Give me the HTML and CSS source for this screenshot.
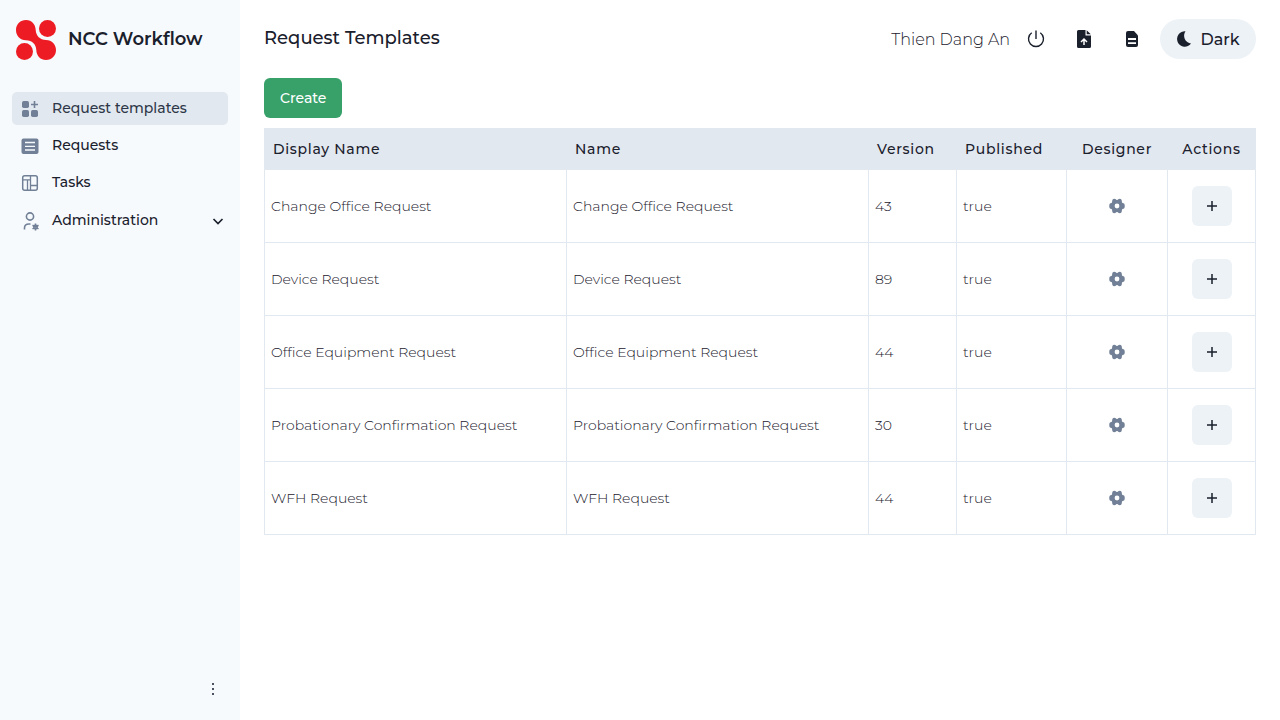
FILE: index.html
```html
<!DOCTYPE html>
<html lang="en">
<head>
<meta charset="utf-8">
<meta name="viewport" content="width=device-width, initial-scale=1">
<title>NCC Workflow</title>
<link rel="stylesheet" href="styles.css">
</head>
<body>
<svg class="symbols" aria-hidden="true">
  <symbol id="gear" viewBox="0 0 16 16">
    <path fill-rule="evenodd" d="M3.300 2.300Q3.600 .9 5 .8L6.400 .9Q7.200 2 8 2T9.600 .9L11 .8Q12.400 .9 12.700 2.300L13 4.400Q13.500 5 14.500 5.200Q15.500 5.500 15.700 7V9Q15.500 10.500 14.500 10.800Q13.500 11 13 11.600L12.700 13.700Q12.400 15.100 11 15.200L9.600 15.100Q8.800 14 8 14T6.400 15.100L5 15.200Q3.600 15.100 3.300 13.700L3 11.600Q2.500 11 1.500 10.800Q.5 10.500 .3 9V7Q.5 5.500 1.500 5.200Q2.500 5 3 4.400ZM8 5.600A2.400 2.400 0 1 0 8 10.400A2.400 2.400 0 1 0 8 5.600Z"/>
  </symbol>
  <symbol id="plus" viewBox="0 0 16 16"><path d="M8 3v10M3 8h10" fill="none" stroke="currentColor" stroke-width="1.500"/></symbol>
</svg>
<div class="app">
  <aside class="sidebar">
    <div class="brand">
      <svg class="logo" viewBox="0 0 40 40" aria-hidden="true">
        <circle cx="31.500" cy="8.500" r="8.500"/><circle cx="8.500" cy="31.500" r="8.500"/>
        <path d="M10 0C16 0 19.500 4.500 19.700 10C20 16 24 19.700 30 20C36 20.200 40 24.500 40 30S36 40 30 40C24.500 40 20.500 36 20.300 30C20 24 16 20.500 10 20.300C4 20 0 16 0 10S4.500 0 10 0Z"/>
      </svg>
      <span class="brand-name">NCC Workflow</span>
    </div>
    <nav class="nav">
      <a class="nav-item active" href="#"><svg class="nav-icon" viewBox="0 0 20 20"><g fill="currentColor"><rect x="2" y="2" width="7" height="7" rx="1.700"/><rect x="2" y="11" width="7" height="7" rx="1.700"/><rect x="11" y="11" width="7" height="7" rx="1.700"/></g><path d="M14.500 2v7M11 5.500h7" stroke="currentColor" stroke-width="1.600" fill="none"/></svg><span class="nav-label">Request templates</span></a>
      <a class="nav-item" href="#"><svg class="nav-icon" viewBox="0 0 20 20"><rect x="1.500" y="2.500" width="17" height="15.500" rx="2" fill="currentColor"/><path d="M5 6.500h10M5 10.300h10M5 14h10" stroke="#f6fafd" stroke-width="1.300"/></svg><span class="nav-label">Requests</span></a>
      <a class="nav-item" href="#"><svg class="nav-icon" viewBox="0 0 20 20"><g fill="none" stroke="currentColor" stroke-width="1.500"><rect x="2.700" y="2.700" width="14.600" height="14.600" rx="2"/><path d="M10.500 2.700v14.600M2.700 6.800h7.800M7.500 6.800v10.500M10.500 12.500h6.800" stroke-width="1.300"/></g></svg><span class="nav-label">Tasks</span></a>
      <button class="nav-item" type="button" aria-expanded="false"><svg class="nav-icon" viewBox="0 0 20 20"><g fill="none" stroke="currentColor" stroke-width="1.600"><circle cx="10" cy="5.500" r="3.600"/><path d="M4.500 18.500v-1.500q0-4 4.500-4h1.500M15.500 12.500v7M12.500 14.200l6 3.600M18.500 14.200l-6 3.600"/><circle cx="15.500" cy="16" r="1.700"/></g></svg><span class="nav-label">Administration</span><svg class="chevron" viewBox="0 0 12 12"><path d="M1.500 4l4.500 4.500L10.500 4" fill="none" stroke="currentColor" stroke-width="1.700"/></svg></button>
    </nav>
    <button class="more" type="button" aria-label="More options"><svg viewBox="0 0 16 16" width="16" height="16"><path d="M7 2h2v2H7zM7 7h2v2H7zM7 12h2v2H7z" fill="#4a5160"/></svg></button>
  </aside>
  <main class="main">
    <header class="topbar">
      <h1 class="title">Request Templates</h1>
      <span class="user">Thien Dang An</span>
      <button class="icon-button" type="button" aria-label="Log out"><svg viewBox="0 0 20 20" width="20" height="20"><path d="M10 1.500v8.500M5.700 3.800a7.500 7.500 0 1 0 8.600 0" fill="none" stroke="currentColor" stroke-width="1.400"/></svg></button>
      <button class="icon-button" type="button" aria-label="Upload file"><svg viewBox="0 0 20 20" width="20" height="20"><path d="M4 1h7.500v5.500H17v11q0 1.500-1.500 1.500H4.500Q3 19 3 17.500V2.500Q3 1 4.500 1ZM12.700 1.200 16.800 5.300h-4.100Z" fill="currentColor"/><path d="M10 16v-5.500M7 13l3-3 3 3" fill="none" stroke="#fff" stroke-width="1.500"/></svg></button>
      <button class="icon-button" type="button" aria-label="Document"><svg viewBox="0 0 20 20" width="20" height="20"><path d="M6 2h6l4 4.500V16q0 2-2 2H6q-2 0-2-2V4q0-2 2-2Z" fill="currentColor"/><path d="M6 10h8M6 14.200h8" stroke="#fff" stroke-width="1.800"/></svg></button>
      <button class="theme" type="button"><svg viewBox="0 0 16 16" width="16" height="16"><path d="M9.500 .3A7.700 7.700 0 1 0 15 12.500 7.800 7.800 0 0 1 9.500 .3Z" fill="currentColor"/></svg>Dark</button>
    </header>
    <button class="create" type="button">Create</button>
    <table class="grid">
      <colgroup><col><col><col class="c-version"><col class="c-published"><col class="c-designer"><col class="c-actions"></colgroup>
      <thead><tr><th>Display Name</th><th>Name</th><th>Version</th><th>Published</th><th class="center">Designer</th><th class="center">Actions</th></tr></thead>
      <tbody>
        <tr><td>Change Office Request</td><td>Change Office Request</td><td>43</td><td>true</td><td class="center"><button class="design" type="button" aria-label="Design Change Office Request"><svg><use href="#gear"/></svg></button></td><td class="center"><button class="add" type="button" aria-label="Add Change Office Request"><svg><use href="#plus"/></svg></button></td></tr>
        <tr><td>Device Request</td><td>Device Request</td><td>89</td><td>true</td><td class="center"><button class="design" type="button" aria-label="Design Device Request"><svg><use href="#gear"/></svg></button></td><td class="center"><button class="add" type="button" aria-label="Add Device Request"><svg><use href="#plus"/></svg></button></td></tr>
        <tr><td>Office Equipment Request</td><td>Office Equipment Request</td><td>44</td><td>true</td><td class="center"><button class="design" type="button" aria-label="Design Office Equipment Request"><svg><use href="#gear"/></svg></button></td><td class="center"><button class="add" type="button" aria-label="Add Office Equipment Request"><svg><use href="#plus"/></svg></button></td></tr>
        <tr><td>Probationary Confirmation Request</td><td>Probationary Confirmation Request</td><td>30</td><td>true</td><td class="center"><button class="design" type="button" aria-label="Design Probationary Confirmation Request"><svg><use href="#gear"/></svg></button></td><td class="center"><button class="add" type="button" aria-label="Add Probationary Confirmation Request"><svg><use href="#plus"/></svg></button></td></tr>
        <tr><td>WFH Request</td><td>WFH Request</td><td>44</td><td>true</td><td class="center"><button class="design" type="button" aria-label="Design WFH Request"><svg><use href="#gear"/></svg></button></td><td class="center"><button class="add" type="button" aria-label="Add WFH Request"><svg><use href="#plus"/></svg></button></td></tr>
      </tbody>
    </table>
  </main>
</div>
</body>
</html>
```
FILE: styles.css
```css
* { box-sizing: border-box; }
body {
  margin: 0;
  color: #1a202c;
  background: #fff;
  font-family: Montserrat, Inter, sans-serif;
}
button {
  padding: 0;
  border: 0;
  background: none;
  color: inherit;
  font: inherit;
  cursor: pointer;
}
svg { flex: none; }
.symbols { display: none; }
.app { display: flex; min-height: 100vh; }
.sidebar {
  display: flex;
  flex: 0 0 240px;
  flex-direction: column;
  padding: 20px 12px;
  background: #f6fafd;
}
.brand { display: flex; align-items: center; gap: 12px; padding: 0 4px; }
.logo { width: 40px; height: 40px; fill: #ed1c24; }
.brand-name { padding-bottom: 2px; font-size: 18px; font-weight: 600; line-height: 24px; white-space: nowrap; }
.nav { display: flex; flex-direction: column; gap: 4px; margin-top: 32px; }
.nav-item {
  display: flex;
  align-items: center;
  gap: 12px;
  min-height: 33px;
  padding: 0 4px 0 8px;
  border-radius: 5px;
  color: #1a202c;
  font-size: 14px;
  font-weight: 500;
  line-height: 20px;
  text-align: left;
  text-decoration: none;
}
button.nav-item { min-height: 35px; }
.nav-label { padding-bottom: 2px; }
.nav-item.active { background: #e2e8f0; color: #2d3748; }
.nav-icon { width: 20px; height: 20px; color: #718096; }
.chevron { width: 12px; height: 12px; margin-left: auto; }
.more { align-self: flex-end; height: 22px; margin-top: auto; margin-right: 7px; }
.more svg { display: block; }
.main { flex: 1; min-width: 0; padding: 18px 24px; }
.topbar { display: flex; align-items: center; min-height: 42px; }
.title { flex: 1; margin: 0; padding-bottom: 2px; font-size: 18px; font-weight: 500; line-height: 24px; }
.user { padding: 2px 2px 0 0; font-size: 16px; font-weight: 300; line-height: 24px; }
.icon-button { display: grid; place-items: center; width: 48px; height: 40px; }
.theme {
  display: flex;
  align-items: center;
  justify-content: center;
  gap: 8px;
  width: 96px;
  height: 40px;
  margin-left: 4px;
  border-radius: 20px;
  background: #edf2f7;
  font-size: 16px;
  font-weight: 500;
}
.create {
  display: block;
  height: 40px;
  margin: 18px 0 10px;
  padding: 0 16px;
  border-radius: 6px;
  background: #38a169;
  color: #fff;
  font-size: 14px;
  font-weight: 500;
}
.grid { width: 100%; border-collapse: collapse; table-layout: fixed; }
.c-version { width: 88px; }
.c-published { width: 110px; }
.c-designer { width: 101px; }
.c-actions { width: 88px; }
.grid th, .grid td { border: 1px solid #e2e8f0; line-height: 20px; font-size: 14px; }
.grid th {
  height: 41px;
  padding: 0 8px;
  background: #e2e8f0;
  font-weight: 500;
  letter-spacing: 0.05em;
  text-align: left;
}
.grid td {
  height: 73px;
  padding: 0 6px;
  font-weight: 300;
}
.grid .center { padding: 0; text-align: center; }
.design, .add {
  display: inline-grid;
  place-items: center;
  width: 40px;
  height: 40px;
  vertical-align: middle;
  border-radius: 6px;
}
.design { color: #718096; fill: currentColor; }
.add { background: #edf2f7; }
.design svg, .add svg { width: 16px; height: 16px; }
```
